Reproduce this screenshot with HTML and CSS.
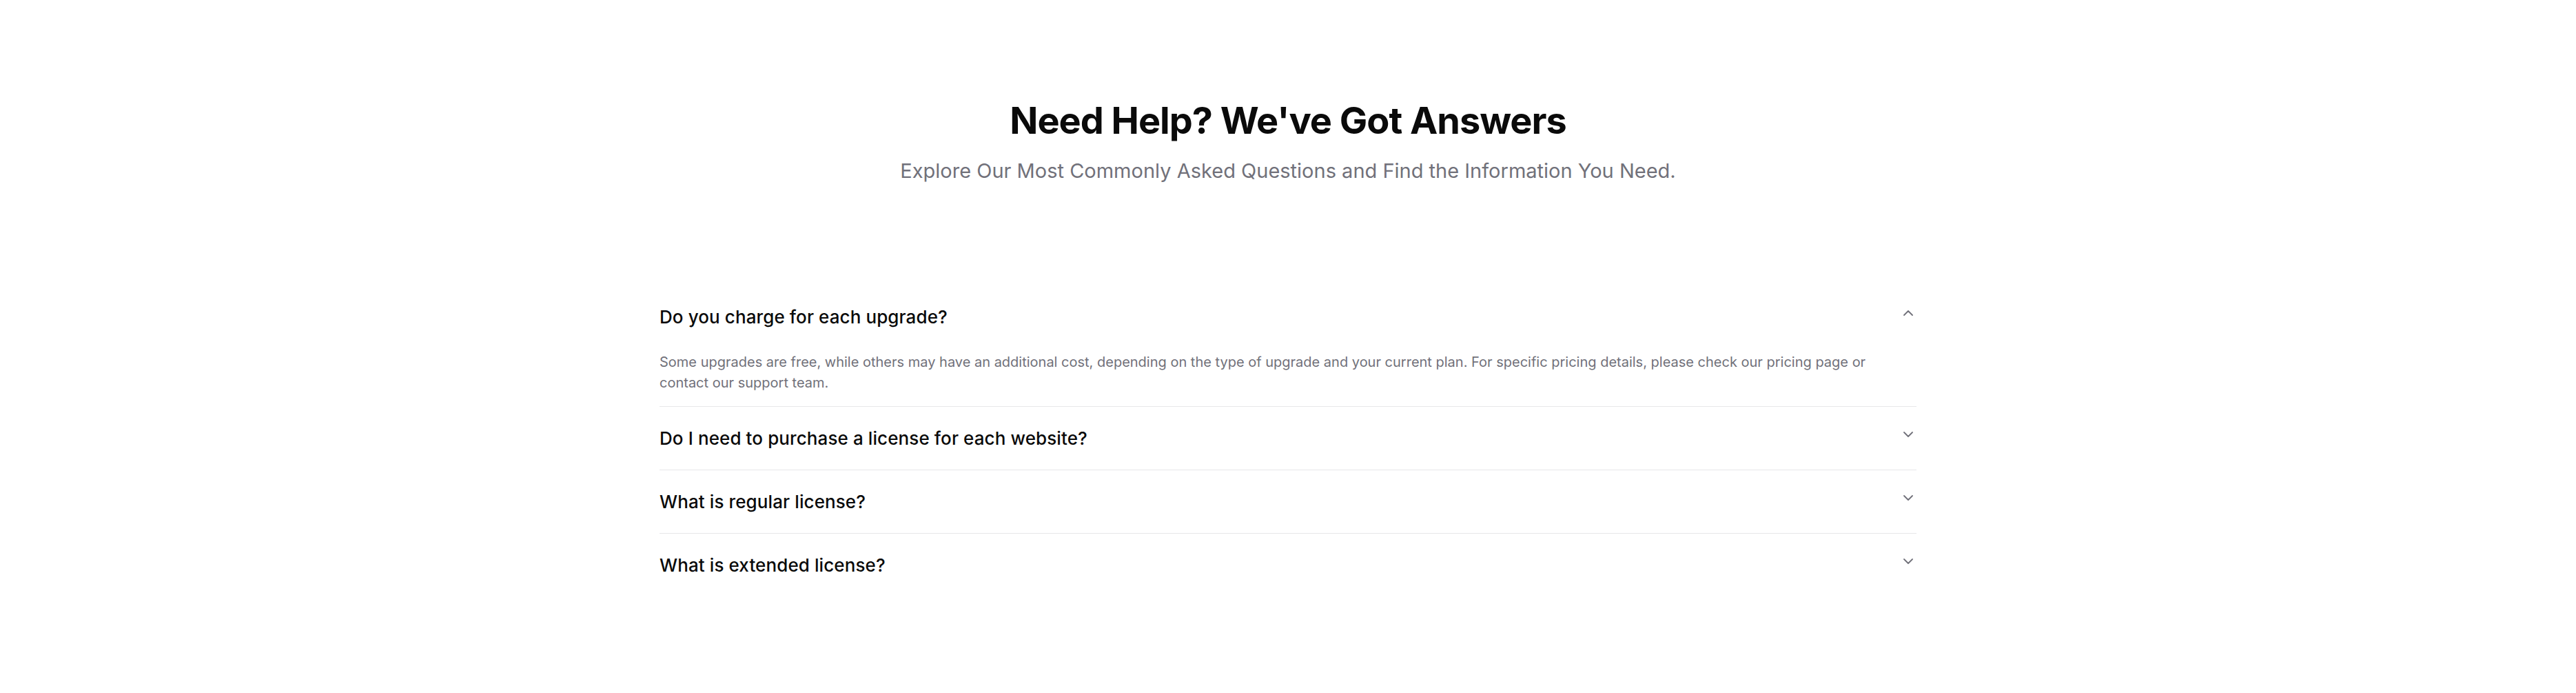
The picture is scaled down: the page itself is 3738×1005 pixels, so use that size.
FILE: index.html
```html
<!DOCTYPE html>
<html lang="en">
<head>
  <meta charset="UTF-8">
  <meta name="viewport" content="width=device-width, initial-scale=1.0">
  <title>FAQ</title>
  <link rel="stylesheet" href="styles.css">
</head>
<body>

<section class="faq">
  <div class="faq-head">
    <h1>Need Help? We've Got Answers</h1>
    <p>Explore Our Most Commonly Asked Questions and Find the Information You Need.</p>
  </div>

  <div class="faq-list">
    <div class="faq-item open">
      <div class="faq-question">
        <span>Do you charge for each upgrade?</span>
        <svg class="chevron" width="14" height="8" viewBox="0 0 14 8"><polyline points="1 7 7 1 13 7"/></svg>
      </div>
      <p class="faq-answer">Some upgrades are free, while others may have an additional cost, depending on the type of upgrade and your current plan. For specific pricing details, please check our pricing page or contact our support team.</p>
    </div>

    <div class="faq-item">
      <div class="faq-question">
        <span>Do I need to purchase a license for each website?</span>
        <svg class="chevron" width="14" height="8" viewBox="0 0 14 8"><polyline points="1 1 7 7 13 1"/></svg>
      </div>
    </div>

    <div class="faq-item">
      <div class="faq-question">
        <span>What is regular license?</span>
        <svg class="chevron" width="14" height="8" viewBox="0 0 14 8"><polyline points="1 1 7 7 13 1"/></svg>
      </div>
    </div>

    <div class="faq-item">
      <div class="faq-question">
        <span>What is extended license?</span>
        <svg class="chevron" width="14" height="8" viewBox="0 0 14 8"><polyline points="1 1 7 7 13 1"/></svg>
      </div>
    </div>
  </div>
</section>

</body>
</html>
```

FILE: styles.css
```css
/* Global */
body {
  margin: 0;
  font-family: Inter, 'Liberation Sans', sans-serif;
  background-color: #ffffff;
  color: #0a0a0a;
}

.faq {
  width: 1824px;
  margin: 0 auto;
  padding-top: 142px;
}

/* Heading */
.faq-head {
  text-align: center;
}

.faq-head h1 {
  margin: 0;
  font-size: 54px;
  line-height: 65px;
  font-weight: 700;
  letter-spacing: -1px;
  color: #0a0a0a;
}

.faq-head p {
  margin: 20px 0 0;
  font-size: 29px;
  line-height: 42px;
  color: #71717a;
}

/* Accordion */
.faq-list {
  margin-top: 145px;
}

.faq-item {
  border-bottom: 1px solid #e7e7e9;
}

.faq-item:last-child {
  border-bottom: none;
}

.faq-question {
  display: flex;
  justify-content: space-between;
  align-items: flex-start;
  padding: 30px 0;
  font-size: 26px;
  line-height: 31px;
  font-weight: 500;
  letter-spacing: 0.1px;
  color: #0a0a0a;
}

.chevron {
  margin: 6px 5px 0 0;
  fill: none;
  stroke: #71717a;
  stroke-width: 1.8;
  stroke-linecap: round;
  stroke-linejoin: round;
}

.faq-answer {
  margin: 0;
  padding: 5px 48px 19px 0;
  font-size: 20px;
  line-height: 30px;
  color: #71717a;
}
```
